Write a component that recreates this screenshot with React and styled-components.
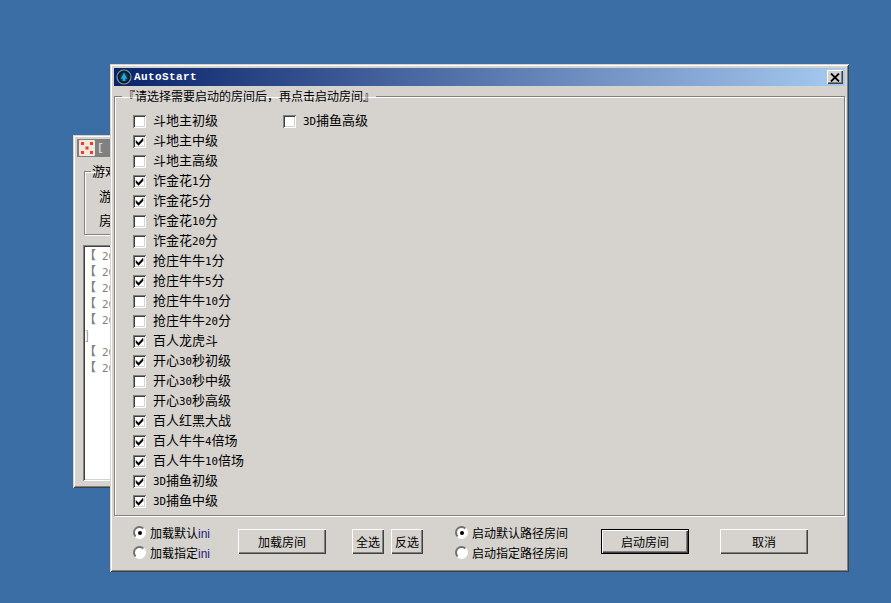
import React from 'react';
import styled, { createGlobalStyle } from 'styled-components';

const FACE = '#d6d3ce';
const Global = createGlobalStyle`
  html, body { margin: 0; padding: 0; width: 891px; height: 603px; overflow: hidden; background: #3a6ea5; }
  * { box-sizing: border-box; }
`;
const FONT = `"Noto Sans CJK SC", "Liberation Sans", sans-serif`;
const Desktop = styled.div`
  position: relative; width: 891px; height: 603px; background: #3a6ea5; overflow: hidden;
  font-family: ${FONT}; font-size: 13px; color: #000;
`;
const Win = styled.div`
  position: absolute;
  left: ${p => p.$x}px; top: ${p => p.$y}px; width: ${p => p.$w}px; height: ${p => p.$h}px;
  background: ${FACE}; padding: 4px;
  box-shadow: inset 1px 1px 0 ${FACE}, inset -1px -1px 0 #404040, inset 2px 2px 0 #fff, inset -2px -2px 0 #808080;
  display: flex; flex-direction: column; overflow: hidden;
`;
const TitleBar = styled.div`
  flex: none; height: 18px; display: flex; align-items: center; gap: 2px; padding: 0 2px 0 2px;
  background: ${p => p.$inactive ? '#808080' : 'linear-gradient(90deg, #0a246a, #a6caf0)'};
`;
const TitleText = styled.span`
  flex: 1; font-family: "Liberation Mono", monospace; font-weight: 700; font-size: 11px;
  letter-spacing: 0.4px; color: ${p => p.$inactive ? FACE : '#fff'}; line-height: 18px;
`;
const CloseBtn = styled.div`
  width: 16px; height: 14px; background: ${FACE}; display: flex; align-items: center; justify-content: center;
  box-shadow: inset 1px 1px 0 #fff, inset -1px -1px 0 #404040, inset -2px -2px 0 #808080;
`;
const Group = styled.fieldset`
  margin: ${p => p.$margin}; padding: 0; min-width: 0; height: ${p => p.$h}px; flex: none;
  border: 1px solid #808080; box-shadow: 1px 1px 0 #fff, inset 1px 1px 0 #fff;
`;
const Legend = styled.legend`
  margin-left: ${p => p.$ml}px; padding: 0 1px; font-size: ${p => p.$fs}px; line-height: 14px; white-space: nowrap;
`;
const CheckGrid = styled.div`
  display: grid; grid-auto-flow: column; grid-template-rows: repeat(20, 20px);
  grid-template-columns: 150px 300px; padding: 8px 0 0 18px;
`;
const CheckRow = styled.div`
  display: flex; align-items: center; gap: 7px; height: 20px; white-space: nowrap;
`;
const CheckLabel = styled.span`
  display: block; height: 20px; line-height: 18px;
`;
const Box = styled.span`
  flex: none; width: 13px; height: 13px; background: #fff; display: flex; align-items: center; justify-content: center;
  box-shadow: inset 1px 1px 0 #808080, inset -1px -1px 0 #fff, inset 2px 2px 0 #404040, inset -2px -2px 0 ${FACE};
`;
const Latin = styled.span`
  font-family: "DejaVu Sans Mono", monospace; font-size: 10.8px; line-height: 1;
`;
const Bottom = styled.div`
  display: flex; align-items: flex-start; padding: 8px 0 0 19px; font-size: 12px;
`;
const RadioCol = styled.div`
  flex: none; width: ${p => p.$w}px; margin-left: ${p => p.$ml || 0}px; display: flex; flex-direction: column; gap: 3px; 
`;
const RadioRow = styled.div`
  display: flex; align-items: center; gap: ${p => p.$gap}px; height: 17px; white-space: nowrap; font-size: 12px;
`;
const Radio = styled.span`
  flex: none; width: 13px; height: 13px; border-radius: 50%; display: flex; align-items: center; justify-content: center;
  background: #fff; border: 2px solid; border-color: #707070 #fff #fff #707070;
  box-shadow: 0 0 0 0.5px ${FACE};
  &::after { content: ''; width: 4px; height: 4px; border-radius: 50%; background: ${p => p.$on ? '#000' : 'transparent'}; }
`;
const Ini = styled.span`
  font-family: "Liberation Sans", sans-serif; color: #1c1c80; font-size: 12px;
`;
const Btn = styled.div`
  flex: none; width: ${p => p.$w}px; height: 25px; margin-top: 5px; margin-left: ${p => p.$ml}px;
  display: flex; align-items: center; justify-content: center; font-size: 12px; background: ${FACE};
  box-shadow: ${p => p.$def
    ? 'inset 0 0 0 1px #000, inset 2px 2px 0 #fff, inset -2px -2px 0 #404040, inset -3px -3px 0 #808080'
    : 'inset 1px 1px 0 #fff, inset -1px -1px 0 #404040, inset -2px -2px 0 #808080'};
`;
const BackInner = styled.div`
  display: flex; flex-direction: column; flex: 1; font-size: 13px;
`;
const BackField = styled.div`
  height: 24px; line-height: 24px; padding-left: 14px; position: relative; top: 6px;
`;
const LogBox = styled.div`
  flex: 1; margin: 10px 0 3px 6px; background: #fff; padding: 2px 0 0 1px;
  font-size: 12px; color: #808080; overflow: hidden;
  box-shadow: inset 1px 1px 0 #808080, inset -1px -1px 0 #fff, inset 2px 2px 0 #404040, inset -2px -2px 0 ${FACE};
`;
const LogLine = styled.div`
  white-space: nowrap; height: 16px; line-height: 16px; overflow: hidden; padding-left: ${p => p.$pad || 0}px;
`;
const LogBracket = styled.span`
  display: inline-block; width: 18px; font-weight: 700;
`;

const Text = ({ children }) => (
  <>{children.split(/([0-9A-Za-z]+)/).map((s, i) => i % 2 ? <Latin key={i}>{s}</Latin> : s)}</>
);

const Check = ({ on, label }) => (
  <CheckRow>
    <Box>{on && (
      <svg width="9" height="9" viewBox="0 0 9 9"><path d="M1 3.5 L3.5 6 L8 1.2 L8 3.8 L3.5 8.4 L1 5.8 Z" fill="#000" stroke="#000" strokeWidth=".5" /></svg>
    )}</Box>
    <CheckLabel><Text>{label}</Text></CheckLabel>
  </CheckRow>
);

const rooms = [
  ['斗地主初级', 0], ['斗地主中级', 1], ['斗地主高级', 0], ['诈金花1分', 1], ['诈金花5分', 1],
  ['诈金花10分', 0], ['诈金花20分', 0], ['抢庄牛牛1分', 1], ['抢庄牛牛5分', 1], ['抢庄牛牛10分', 0],
  ['抢庄牛牛20分', 0], ['百人龙虎斗', 1], ['开心30秒初级', 1], ['开心30秒中级', 0], ['开心30秒高级', 0],
  ['百人红黑大战', 1], ['百人牛牛4倍场', 1], ['百人牛牛10倍场', 1], ['3D捕鱼初级', 1], ['3D捕鱼中级', 1],
  ['3D捕鱼高级', 0],
];

const AppIcon = () => (
  <svg width="16" height="16" viewBox="0 0 16 16" style={{ flex: 'none' }}>
    <circle cx="8" cy="8" r="7.6" fill="#7f98a0" />
    <circle cx="8" cy="8" r="6.4" fill="#0a1a24" />
    <circle cx="8" cy="8" r="4.8" fill="#0f3148" />
    <path d="M8 3.6 L11.4 10 L9.4 9.4 L9.4 12 L6.6 12 L6.6 9.4 L4.6 10 Z" fill="#28a8e0" />
  </svg>
);
const DiceIcon = () => (
  <svg width="16" height="16" viewBox="0 0 16 16" style={{ flex: 'none' }}>
    <rect x="0" y="0" width="16" height="16" rx="1" fill="#f3e6da" />
    <rect x="2" y="2" width="3" height="3" fill="#ec3a2c" />
    <rect x="11" y="2" width="3" height="3" fill="#ec3a2c" />
    <rect x="6.5" y="6.5" width="3" height="3" fill="#ec3a2c" />
    <rect x="2" y="11" width="3" height="3" fill="#ec3a2c" />
    <rect x="11" y="11" width="3" height="3" fill="#ec3a2c" />
  </svg>
);

const LogEntry = () => <LogLine><LogBracket>【</LogBracket><Latin>20</Latin></LogLine>;

export default function App() {
  return (
    <Desktop>
      <Global />
      <Win $x={73} $y={135} $w={300} $h={353}>
        <TitleBar $inactive>
          <DiceIcon />
          <TitleText $inactive>[</TitleText>
        </TitleBar>
        <BackInner>
          <Group $margin="7px 0 0 7px" $h={71}>
            <Legend $ml={6} $fs={13}>游戏</Legend>
            <BackField>游</BackField>
            <BackField>房</BackField>
          </Group>
          <LogBox>
            <LogEntry />
            <LogEntry />
            <LogEntry />
            <LogEntry />
            <LogEntry />
            <LogLine $pad={1}>]</LogLine>
            <LogEntry />
            <LogEntry />
          </LogBox>
        </BackInner>
      </Win>

      <Win $x={110} $y={64} $w={739} $h={508}>
        <TitleBar>
          <AppIcon />
          <TitleText>AutoStart</TitleText>
          <CloseBtn>
            <svg width="10" height="9" viewBox="0 0 10 9"><path d="M1 0.5 L9 8.5 M9 0.5 L1 8.5" stroke="#000" strokeWidth="1.8" /></svg>
          </CloseBtn>
        </TitleBar>
        <Group $margin="3px 0 0 0" $h={427}>
          <Legend $ml={7} $fs={12}>『请选择需要启动的房间后，再点击启动房间』</Legend>
          <CheckGrid>
            {rooms.map(([label, on]) => <Check key={label} label={label} on={!!on} />)}
          </CheckGrid>
        </Group>
        <Bottom>
          <RadioCol $w={105}>
            <RadioRow $gap={4}><Radio $on /><span>加载默认<Ini>ini</Ini></span></RadioRow>
            <RadioRow $gap={4}><Radio /><span>加载指定<Ini>ini</Ini></span></RadioRow>
          </RadioCol>
          <Btn $w={88} $ml={0}>加载房间</Btn>
          <Btn $w={32} $ml={26}>全选</Btn>
          <Btn $w={32} $ml={7}>反选</Btn>
          <RadioCol $w={146} $ml={32}>
            <RadioRow $gap={4}><Radio $on /><span>启动默认路径房间</span></RadioRow>
            <RadioRow $gap={4}><Radio /><span>启动指定路径房间</span></RadioRow>
          </RadioCol>
          <Btn $w={88} $ml={0} $def>启动房间</Btn>
          <Btn $w={88} $ml={31}>取消</Btn>
        </Bottom>
      </Win>
    </Desktop>
  );
}
